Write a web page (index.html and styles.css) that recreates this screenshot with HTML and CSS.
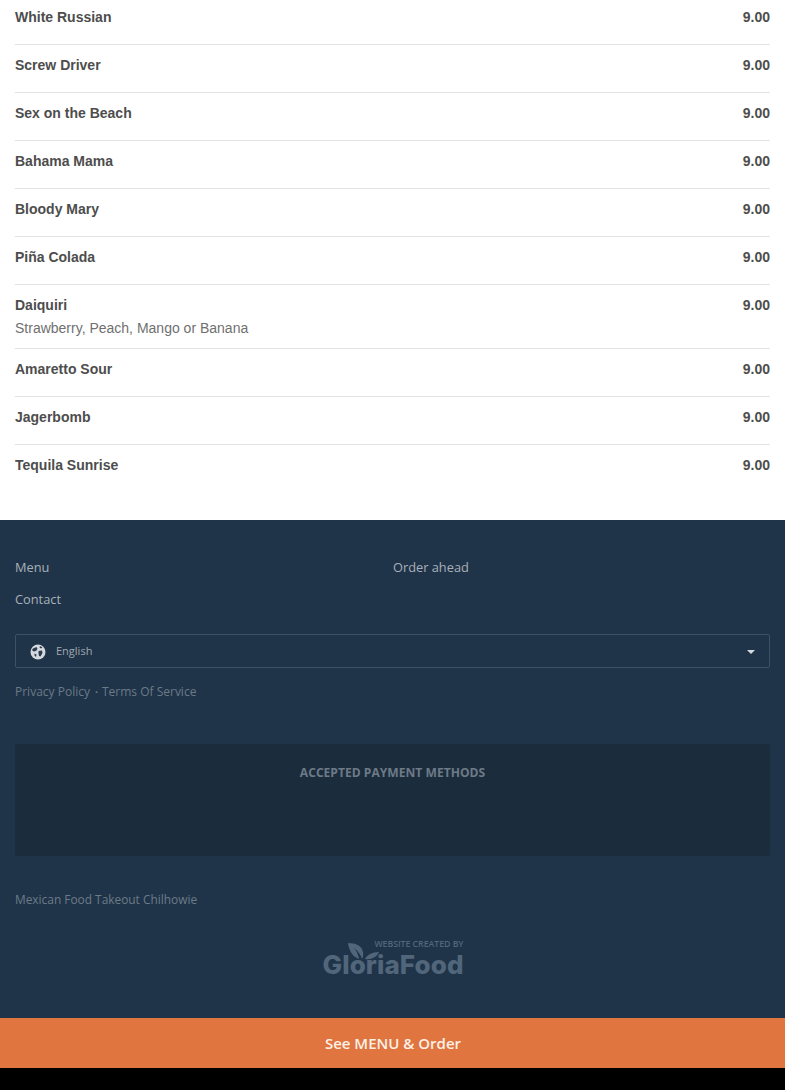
FILE: index.html
```html
<!DOCTYPE html>
<html lang="en">
<head>
  <meta charset="UTF-8" />
  <meta name="viewport" content="width=device-width, initial-scale=1.0"/>
  <title>Drinks Menu</title>
  <link rel="stylesheet" href="styles.css">
</head>
<body>
  <main class="menu-list">
    <div class="menu-item"><div><div class="item-name">White Russian</div></div><div class="item-price">9.00</div></div>
    <div class="menu-item"><div><div class="item-name">Screw Driver</div></div><div class="item-price">9.00</div></div>
    <div class="menu-item"><div><div class="item-name">Sex on the Beach</div></div><div class="item-price">9.00</div></div>
    <div class="menu-item"><div><div class="item-name">Bahama Mama</div></div><div class="item-price">9.00</div></div>
    <div class="menu-item"><div><div class="item-name">Bloody Mary</div></div><div class="item-price">9.00</div></div>
    <div class="menu-item"><div><div class="item-name">Piña Colada</div></div><div class="item-price">9.00</div></div>
    <div class="menu-item has-desc"><div><div class="item-name">Daiquiri</div><div class="item-desc">Strawberry, Peach, Mango or Banana</div></div><div class="item-price">9.00</div></div>
    <div class="menu-item"><div><div class="item-name">Amaretto Sour</div></div><div class="item-price">9.00</div></div>
    <div class="menu-item"><div><div class="item-name">Jagerbomb</div></div><div class="item-price">9.00</div></div>
    <div class="menu-item"><div><div class="item-name">Tequila Sunrise</div></div><div class="item-price">9.00</div></div>
  </main>

  <footer class="site-footer">
    <nav class="footer-links">
      <a>Menu</a>
      <a>Order ahead</a>
      <a>Contact</a>
    </nav>

    <div class="lang-select">
      <svg class="globe" width="16" height="16" viewBox="0 0 16 16">
        <circle cx="8" cy="8" r="7.5" fill="#d5d9dd"/>
        <path d="M3 4.500 6.500 3 7.500 5 6 7 3.500 7.500 2 6ZM8.500 7 12 6.500 12.500 9 10.500 12.500 9 12 8.500 9.500ZM10 2 12.500 3.500 11 4.500 9.500 3.500ZM4.500 9.500 6.500 10.500 6 13 4.500 11.500Z" fill="#2a3c50"/>
      </svg>
      <span class="lang-name">English</span>
      <span class="caret"></span>
    </div>

    <div class="legal">
      <a>Privacy Policy</a><span class="dot">•</span><a>Terms Of Service</a>
    </div>

    <section class="payment-box">
      <h3>ACCEPTED PAYMENT METHODS</h3>
    </section>

    <p class="seo-line">Mexican Food Takeout Chilhowie</p>

    <div class="brand">
      <div class="brand-top">WEBSITE CREATED BY</div>
      <div class="brand-name">
        <svg class="leaf" width="32" height="18" viewBox="0 0 32 18">
          <path d="M0 0C8 0 14 3 15 9 15.500 12 15 14 14 16 13 12 10 8 6 5 9 9 10.500 12 11 16 5 14 1 8 0 0Z" fill="#51667a"/>
          <path d="M17 16C19 12 24 9 31 9 29 14 23 17 17 16Z" fill="#51667a"/>
        </svg>
        <span>GloriaFood</span>
      </div>
    </div>
  </footer>

  <a class="order-bar">See MENU &amp; Order</a>
  <div class="bottom-strip"></div>
</body>
</html>
```

FILE: styles.css
```css
* {
  box-sizing: border-box;
}

body {
  margin: 0;
  background: #000;
  font-family: "Open Sans", sans-serif;
}

.menu-list {
  background: #fff;
  padding: 0 15px 43px;
  font-family: "Liberation Sans", Arial, sans-serif;
  font-size: 14px;
  line-height: 23px;
}

.menu-item {
  display: flex;
  justify-content: space-between;
  padding: 9px 0 15px;
  border-bottom: 1px solid #e3e3e3;
}

.menu-item:first-child {
  padding-top: 6px;
}

.menu-item:last-child {
  padding-bottom: 0;
  border-bottom: none;
}

.menu-item.has-desc {
  padding-bottom: 8px;
}

.item-name,
.item-price {
  font-weight: bold;
  color: #4d4d4d;
}

.item-desc {
  color: #707070;
}

.site-footer {
  background: #1f3449;
  height: 498px;
  padding: 36px 15px 0;
}

.footer-links {
  display: grid;
  grid-template-columns: 378px 1fr;
  row-gap: 10px;
  font-size: 12.8px;
  line-height: 22px;
  color: #a9b0b8;
}

.lang-select {
  display: flex;
  align-items: center;
  height: 34px;
  margin-top: 24px;
  padding: 0 14px;
  border: 1px solid #3f5163;
  border-radius: 2px;
  font-size: 11px;
  color: #a0a8b0;
}

.globe {
  margin-top: 2px;
}

.lang-name {
  margin-left: 10px;
  margin-bottom: 2px;
  flex: 1;
}

.caret {
  width: 0;
  height: 0;
  margin-top: 2px;
  border-left: 4px solid transparent;
  border-right: 4px solid transparent;
  border-top: 4px solid #d5d9dd;
}

.legal {
  margin-top: 14px;
  font-size: 12px;
  line-height: 20px;
  color: #6d7a87;
}

.dot {
  margin: 0 4px 0 5px;
  font-size: 8px;
  vertical-align: 1px;
}

.payment-box {
  height: 112px;
  margin-top: 42px;
  padding-top: 20px;
  background: #1b2c3c;
  border-radius: 2px;
  text-align: center;
}

.payment-box h3 {
  margin: 0;
  font-size: 12.1px;
  line-height: 18px;
  font-weight: bold;
  color: #6d7a87;
}

.seo-line {
  margin: 33px 0 0;
  font-size: 11.9px;
  line-height: 20px;
  color: #6d7a87;
}

.brand {
  width: 142px;
  margin: 30px auto 0;
  color: #51667a;
}

.brand-top {
  font-size: 8.7px;
  line-height: 11px;
  font-weight: 600;
  text-align: right;
  white-space: nowrap;
}

.brand-name {
  position: relative;
  height: 26px;
  margin-top: 2px;
  padding-left: 1px;
  font-family: Inter, sans-serif;
  font-size: 26px;
  font-weight: 800;
  line-height: 26px;
  letter-spacing: 0.1px;
  white-space: nowrap;
}

.leaf {
  position: absolute;
  left: 26px;
  top: -9px;
}

.order-bar {
  display: block;
  height: 50px;
  padding-left: 1px;
  background: #e07540;
  color: #fdf1e6;
  font-size: 15px;
  font-weight: 600;
  line-height: 50px;
  text-align: center;
}

.bottom-strip {
  height: 22px;
  background: #000;
}
```
